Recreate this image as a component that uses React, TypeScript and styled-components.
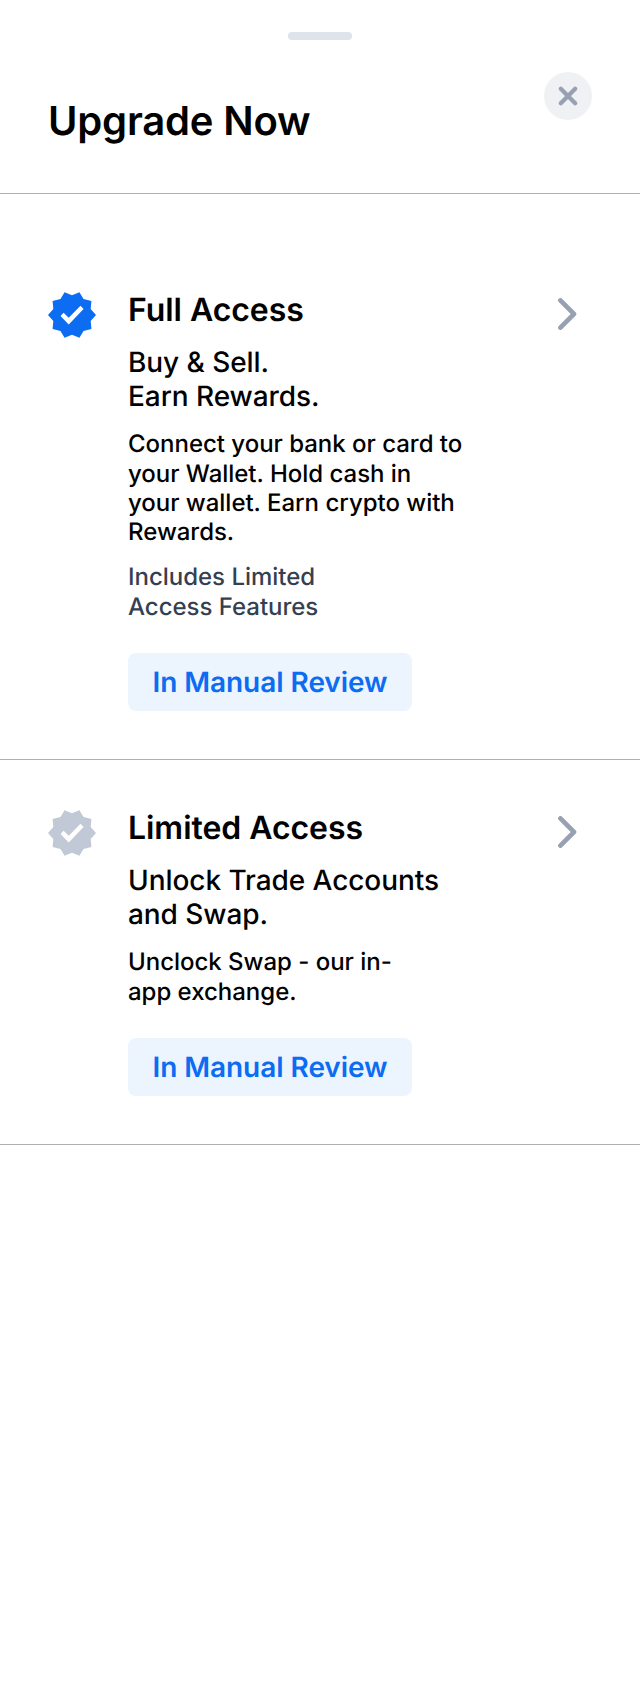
import React from 'react';
import styled, { createGlobalStyle } from 'styled-components';

const GlobalStyle = createGlobalStyle`
  * { box-sizing: border-box; }
  body { margin: 0; background: #fff; }
`;

const Sheet = styled.main`
  display: flex;
  flex-direction: column;
  min-height: 1700px;
  background: #fff;
  color: #000;
  font-family: Inter, "Liberation Sans", sans-serif;
  text-rendering: geometricPrecision;
  -webkit-font-smoothing: antialiased;
  padding-top: 32px;
`;

const Handle = styled.div`
  width: 64px;
  height: 8px;
  border-radius: 4px;
  background: #dfe3eb;
  align-self: center;
`;

const Header = styled.header`
  display: flex;
  justify-content: space-between;
  align-items: flex-start;
  height: 154px;
  padding: 32px 48px 0;
  border-bottom: 1px solid #b0b0b0;
`;

const Title = styled.h1`
  margin: 24px 0 0;
  font-size: 40px;
  font-weight: 600;
  line-height: 49px;
  letter-spacing: -0.17px;
`;

const CloseButton = styled.button`
  display: flex;
  align-items: center;
  justify-content: center;
  width: 48px;
  height: 48px;
  padding: 0;
  border: 0;
  border-radius: 50%;
  background: #eff1f5;
`;

const TierList = styled.div`
  padding-top: 48px;
`;

const Tier = styled.section`
  display: flex;
  align-items: flex-start;
  padding: 48px;
  border-bottom: 1px solid #b0b0b0;
`;

const TierBody = styled.div`
  width: 350px;
  margin: 0 auto 0 32px;
`;

const TierTitle = styled.h2`
  margin: 0 0 16px;
  font-size: 32px;
  font-weight: 600;
  line-height: 39px;
  letter-spacing: -0.05px;
`;

const Tagline = styled.p`
  margin: 0 0 16.35px;
  font-size: 28px;
  font-weight: 500;
  line-height: 34px;
  letter-spacing: -0.06px;
`;

const Description = styled.p`
  margin: 0 0 15.65px;
  font-size: 24px;
  font-weight: 500;
  line-height: 29.33px;
  letter-spacing: -0.02px;
`;

const Note = styled(Description)`
  margin-bottom: 16px;
  color: #353f52;
`;

const Status = styled.span`
  display: inline-flex;
  justify-content: center;
  vertical-align: top;
  width: 284px;
  margin-top: 16px;
  padding: 12px 0;
  border-radius: 8px;
  background: #ecf5fe;
  color: #0c6cf2;
  font-size: 28px;
  font-weight: 600;
  line-height: 34px;
  letter-spacing: -0.05px;
  white-space: nowrap;
`;

const Badge = styled.svg`
  margin-top: 1px;
`;

const BadgeIcon = ({ color }: { color: string }) => (
  <Badge width="48" height="48" viewBox="1 1 22 22" fill="none">
    <path
      fill={color}
      d="M23 12l-2.44-2.78.34-3.68-3.61-.82-1.89-3.18L12 3 8.6 1.54 6.71 4.72l-3.61.81.34 3.68L1 12l2.44 2.78-.34 3.69 3.61.82 1.89 3.18L12 21l3.4 1.46 1.89-3.18 3.61-.82-.34-3.68L23 12z"
    />
    <path fill="#fff" d="M10.5 16.3L6.75 12.5l1.4-1.5 2.35 2.3 5.4-5.5 1.4 1.5z" />
  </Badge>
);

const Chevron = styled.svg`
  margin: 8px 14px 0 0;
`;

const tiers = [
  {
    title: 'Full Access',
    color: '#0c6cf2',
    tagline: ['Buy & Sell.', 'Earn Rewards.'],
    description: ['Connect your bank or card to', 'your Wallet. Hold cash in', 'your wallet. Earn crypto with', 'Rewards.'],
    note: ['Includes Limited', 'Access Features'],
  },
  {
    title: 'Limited Access',
    color: '#c1c8d6',
    tagline: ['Unlock Trade Accounts', 'and Swap.'],
    description: ['Unclock Swap - our in-', 'app exchange.'],
    note: null,
  },
];

const lines = (parts: string[]) =>
  parts.map((part, i) => (
    <React.Fragment key={part}>
      {i > 0 && <br />}
      {part}
    </React.Fragment>
  ));

export default function App() {
  return (
    <Sheet>
      <GlobalStyle />
      <Handle />
      <Header>
        <Title>Upgrade Now</Title>
        <CloseButton aria-label="Close">
          <svg width="24" height="24" viewBox="0 0 24 24" fill="none" stroke="#98a1b2" strokeWidth="4.3" strokeLinecap="round">
            <path d="M4.8 4.8l14.4 14.4M19.2 4.8L4.8 19.2" />
          </svg>
        </CloseButton>
      </Header>
      <TierList>
        {tiers.map((tier) => (
          <Tier key={tier.title}>
            <BadgeIcon color={tier.color} />
            <TierBody>
              <TierTitle>{tier.title}</TierTitle>
              <Tagline>{lines(tier.tagline)}</Tagline>
              <Description>{lines(tier.description)}</Description>
              {tier.note && <Note>{lines(tier.note)}</Note>}
              <Status>In Manual Review</Status>
            </TierBody>
            <Chevron width="20" height="32" viewBox="0 0 20 32" fill="none" stroke="#98a1b2" strokeWidth="4.6" strokeLinecap="round" strokeLinejoin="round">
              <path d="M2.4 2.4L16 16 2.4 29.6" />
            </Chevron>
          </Tier>
        ))}
      </TierList>
    </Sheet>
  );
}
